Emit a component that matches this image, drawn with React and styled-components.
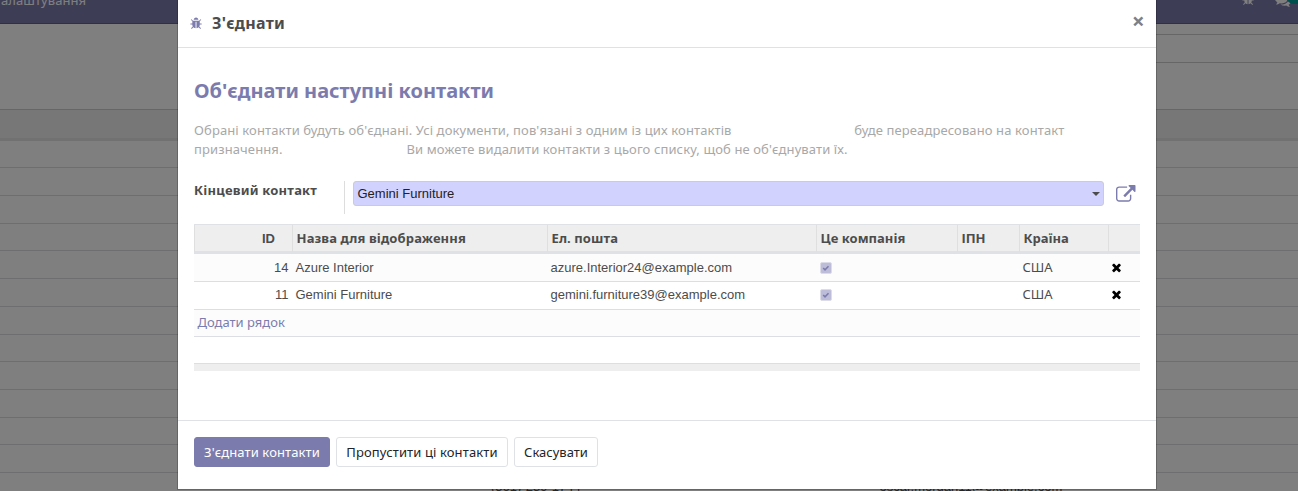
import React from "react";
import styled, { createGlobalStyle } from "styled-components";

const sans = `"Noto Sans", sans-serif`;
const arial = `"Liberation Sans", Arial, sans-serif`;

const Global = createGlobalStyle`
  * { box-sizing: border-box; }
  body { margin: 0; background: #fff; overflow: hidden; font: 13px/19.5px ${sans}; color: #4c4c4c; }
  button { font: inherit; cursor: pointer; }
`;

const Screen = styled.div`
  position: relative;
  height: 491px;
  overflow: hidden;
`;

/* Page behind the dialog */
const Navbar = styled.header`
  display: flex;
  align-items: flex-start;
  justify-content: space-between;
  height: 24px;
  background: #7c7bad;
  border-bottom: 1px solid #5f5e97;
  color: #fff;
`;
const NavItem = styled.span`
  margin: -9px 0 0 1px;
  letter-spacing: 0.07px;
`;
const NavIcons = styled.div`
  display: flex;
  align-items: flex-start;
  margin: -7px 0 0;
`;
const NavIcon = styled.svg`
  width: ${(p) => p.$size}px;
  height: ${(p) => p.$size}px;
  margin-top: ${(p) => p.$top || 0}px;
  margin-right: ${(p) => p.$gap || 0}px;
  fill: #fff;
`;
const Counter = styled.span`
  width: 20px;
  height: 16px;
  margin: -5px -8px 0 -5px;
  border-radius: 8px;
  background: #00a09d;
`;
const ControlPanel = styled.div`
  display: flex;
  justify-content: flex-end;
  height: 86px;
  padding-top: 10px;
  border-bottom: 1px solid #ccc;
`;
const SearchArea = styled.div`
  width: 649px;
  height: 29px;
  border: solid #ccc;
  border-width: 1px 0;
`;
const ListHead = styled.div`
  height: 31px;
  margin-bottom: -0.5px;
  background: #eee;
  border-bottom: 3px solid #e2e2e2;
`;
const ListRow = styled.div`
  display: flex;
  height: 27.72px;
  border-bottom: 1px solid #dcdce0;
  font: 13px/28px ${arial};
`;
const ListText = styled.span`
  width: ${(p) => p.$w}px;
  margin-left: ${(p) => p.$left}px;
  white-space: nowrap;
`;

/* Dialog */
const Backdrop = styled.div`
  position: absolute;
  inset: 0;
  background: rgba(0, 0, 0, 0.5);
  display: flex;
  justify-content: center;
  align-items: flex-start;
`;
const Dialog = styled.section`
  width: 980px;
  height: 490px;
  margin-left: 36px;
  border: 1px solid rgba(0, 0, 0, 0.2);
  border-top: 0;
  background: #fff;
  background-clip: padding-box;
  display: flex;
  flex-direction: column;
`;
const DialogHead = styled.div`
  display: flex;
  align-items: flex-start;
  height: 48px;
  padding: 0 12px;
  border-bottom: 1px solid #dee2e6;
`;
const Bug = styled.svg`
  width: 13px;
  height: 13px;
  margin-top: 17px;
  fill: #7c7bad;
`;
const DialogTitle = styled.h4`
  flex: 1;
  margin: 11px 0 0 9px;
  font-size: 16px;
  line-height: 24px;
  font-weight: 700;
  letter-spacing: 0.24px;
`;
const Close = styled.button`
  border: 0;
  padding: 0;
  margin: 10px -0.5px 0 0;
  background: none;
  color: #808080;
  font-size: 22px;
  line-height: 20px;
  height: 20px;
  font-weight: 700;
`;
const DialogBody = styled.div`
  height: 372px;
  padding: 30px 16px 0;
`;
const Heading = styled.h2`
  margin: 0 0 17px;
  font-size: 20px;
  line-height: 26px;
  color: #7c7bad;
`;
const Hint = styled.p`
  margin: 0;
  line-height: 19px;
  letter-spacing: 0.112px;
  color: #a8a8a8;
`;
const Blank = styled.span`
  display: inline-block;
  width: ${(p) => p.$w}px;
`;
const Field = styled.div`
  display: flex;
  height: 33px;
  margin: 22px 0 10px;
`;
const Label = styled.label`
  width: 151px;
  border-right: 1px solid #ddd;
  font-weight: 700;
  letter-spacing: 0.23px;
`;
const Select = styled.div`
  display: flex;
  align-items: center;
  justify-content: space-between;
  width: 751px;
  height: 25px;
  margin-left: 8px;
  padding: 0 3px 0 3.5px;
  border: 1px solid #ccc;
  border-radius: 3px;
  background: #d2d2ff;
  color: #222;
  font-family: ${arial};
`;
const Caret = styled.span`
  border: 4px solid transparent;
  border-top-color: #4c4c4c;
  border-bottom: 0;
`;
const External = styled.svg`
  width: 19.5px;
  height: 19.5px;
  margin: 3.5px 0 0 12px;
  fill: #7c7bad;
`;

const Table = styled.div`
  display: flex;
  flex-direction: column;
`;
const Row = styled.div`
  display: grid;
  grid-template-columns: 98px 255px 269px 141px 62px 89px 32px;
  height: ${(p) => p.$h}px;
  line-height: ${(p) => p.$line || 27}px;
  background: ${(p) => (p.$odd ? "#fcfcfc" : "#fff")};
  border-bottom: 1px solid #dddde6;
`;
const HeadRow = styled(Row)`
  background: #eee;
  border-top: 1px solid #dee2e6;
  border-bottom: 3px solid #dee2e6;
`;
const HeadCell = styled.div`
  border-left: 1px solid #dfdfdf;
  padding: ${(p) => (p.$right ? "0 17px 0 0" : "0 0 0 3.5px")};
  text-align: ${(p) => (p.$right ? "right" : "left")};
  font-family: ${(p) => (p.$right ? arial : sans)};
  font-weight: 700;
  letter-spacing: ${(p) => p.$track || 0}px;
`;
const Cell = styled.div`
  padding: ${(p) => (p.$right ? "0 3.5px 0 0" : "0 0 0 3.5px")};
  text-align: ${(p) => (p.$right ? "right" : "left")};
  font-family: ${(p) => (p.$noto ? sans : arial)};
`;
const IconCell = styled.div`
  display: flex;
  align-items: center;
  height: ${(p) => p.$h}px;
  padding-left: ${(p) => p.$pad}px;
`;
const CheckBox = styled.svg`
  width: 12px;
  height: 12px;
`;
const Remove = styled.svg`
  width: 13px;
  height: 13px;
  fill: #000;
`;
const AddLine = styled.a`
  grid-column: 1 / -1;
  padding-left: 3.5px;
  color: #7c7bad;
`;
const TableFoot = styled.div`
  height: 7px;
  background: #eee;
`;
const DialogFoot = styled.footer`
  display: flex;
  gap: 6px;
  height: 69px;
  padding: 16px;
  border-top: 1px solid #dee2e6;
`;
const Button = styled.button`
  width: ${(p) => p.$w}px;
  height: 30px;
  padding: 1px 0 0;
  border: 1px solid ${(p) => (p.$primary ? "#7c7bad" : "#dee2e6")};
  border-radius: 3px;
  background: ${(p) => (p.$primary ? "#7c7bad" : "#fff")};
  color: ${(p) => (p.$primary ? "#fff" : "#212529")};
  letter-spacing: ${(p) => p.$track || 0}px;
  white-space: nowrap;
`;

const BUG =
  "M1632 960q0 26-19 45t-45 19h-224q0 171-67 290l208 209q19 19 19 45t-19 45q-18 19-45 19t-45-19l-198-197q-5 5-15 13t-42 28.5-65 36.5-82 29-97 13v-896h-128v896q-51 0-101.5-13.5t-87-33-66-39-43.5-32.5l-15-14-183 207q-20 21-48 21-24 0-43-16-19-18-20.5-44.5t15.5-46.5l202-227q-58-114-58-274h-224q-26 0-45-19t-19-45 19-45 45-19h224v-294l-173-173q-19-19-19-45t19-45 45-19 45 19l173 173h844l173-173q19-19 45-19t45 19 19 45-19 45l-173 173v294h224q26 0 45 19t19 45zm-480-576h-640q0-133 93.5-226.5t226.5-93.5 226.5 93.5 93.5 226.5z";
const LINK =
  "M1408 928v320q0 119-84.5 203.5t-203.5 84.5h-832q-119 0-203.5-84.5t-84.5-203.5v-832q0-119 84.5-203.5t203.5-84.5h704q14 0 23 9t9 23v64q0 14-9 23t-23 9h-704q-66 0-113 47t-47 113v832q0 66 47 113t113 47h832q66 0 113-47t47-113v-320q0-14 9-23t23-9h64q14 0 23 9t9 23zm384-864v512q0 26-19 45t-45 19-45-19l-176-176-652 652q-10 10-23 10t-23-10l-114-114q-10-10-10-23t10-23l652-652-176-176q-19-19-19-45t19-45 45-19h512q26 0 45 19t19 45z";
const TIMES =
  "M1490 1322q0 40-28 68l-136 136q-28 28-68 28t-68-28l-294-294-294 294q-28 28-68 28t-68-28l-136-136q-28-28-28-68t28-68l294-294-294-294q-28-28-28-68t28-68l136-136q28-28 68-28t68 28l294 294 294-294q28-28 68-28t68 28l136 136q28 28 28 68t-28 68l-294 294 294 294q28 28 28 68z";
const COMMENTS =
  "M1408 768q0 139-94 257t-256.5 186.5-353.500 68.500q-86 0-176-16-124 88-278 128-36 9-86 16h-3q-11 0-20.500-8t-11.500-21q-1-3-1-6.500t.5-6.500 2-6l2.500-5 3.500-5.500 4-5 4.500-5 4-4.500q5-6 23-25t26-29.500 22.500-29 25-38.500 20.500-44q-124-72-195-177t-71-224q0-139 94-257t256.500-186.500 353.500-68.500 353.500 68.500 256.500 186.500 94 257zm384 256q0 120-71 224.500t-195 176.500q10 24 20.500 44t25 38.500 22.500 29 26 29.500 23 25q1 1 4 4.500t4.500 5 4 5 3.500 5.500l2.500 5 2 6 .5 6.500-1 6.500q-3 14-13 22t-22 7q-50-7-86-16-154-40-278-128-90 16-176 16-271 0-472-132 58 4 88 4 161 0 309-45t264-129q125-92 192-212t67-254q0-77-23-152 129 71 204 178t75 230z";

const people = [
  { id: 14, name: "Azure Interior", email: "azure.Interior24@example.com", line: 27 },
  { id: 11, name: "Gemini Furniture", email: "gemini.furniture39@example.com", line: 25 },
];
const headers = [
  { text: "Назва для відображення", track: 0.12 },
  { text: "Ел. пошта", track: 0.1 },
  { text: "Це компанія", track: 0.05 },
  { text: "ІПН" },
  { text: "Країна" },
  { text: "" },
];

export default function App() {
  return (
    <Screen>
      <Global />
      <Navbar>
        <NavItem>алаштування</NavItem>
        <NavIcons>
          <NavIcon $size={13} $gap={20} viewBox="0 0 1792 1792"><path d={BUG} /></NavIcon>
          <NavIcon $size={16} $top={-1} viewBox="0 0 1792 1792"><path d={COMMENTS} /></NavIcon>
          <Counter />
        </NavIcons>
      </Navbar>
      <ControlPanel><SearchArea /></ControlPanel>
      <ListHead />
      {Array.from({ length: 12 }, (_, i) => <ListRow key={i} />)}
      <ListRow>
        <ListText $left={491} $w={100}>(561)-239-1744</ListText>
        <ListText $left={288.5} $w={200}>oscar.morgan11@example.com</ListText>
      </ListRow>

      <Backdrop>
        <Dialog>
          <DialogHead>
            <Bug viewBox="0 0 1792 1792"><path d={BUG} /></Bug>
            <DialogTitle>З'єднати</DialogTitle>
            <Close>×</Close>
          </DialogHead>
          <DialogBody>
            <Heading>Об'єднати наступні контакти</Heading>
            <Hint>
              Обрані контакти будуть об'єднані. Усі документи, пов'язані з одним із цих контактів
              <Blank $w={122.6} />
              буде переадресовано на контакт
              <br />
              призначення.
              <Blank $w={124} />
              Ви можете видалити контакти з цього списку, щоб не об'єднувати їх.
            </Hint>
            <Field>
              <Label>Кінцевий контакт</Label>
              <Select>Gemini Furniture<Caret /></Select>
              <External viewBox="0 0 1792 1792"><path d={LINK} /></External>
            </Field>
            <Table>
              <HeadRow $h={30}>
                <HeadCell $right>ID</HeadCell>
                {headers.map((h, i) => <HeadCell key={i} $track={h.track}>{h.text}</HeadCell>)}
              </HeadRow>
              {people.map((p, i) => (
                <Row key={p.id} $h={28} $line={p.line} $odd={i % 2 === 0}>
                  <Cell $right>{p.id}</Cell>
                  <Cell>{p.name}</Cell>
                  <Cell>{p.email}</Cell>
                  <IconCell $pad={4} $h={p.line}>
                    <CheckBox viewBox="0 0 12 12">
                      <rect x="0.5" y="0.5" width="11" height="11" rx="1.5" fill="#bdbcd9" stroke="#dcdce8" />
                      <path d="M3.2 6l1.8 1.8L8.5 4.2" fill="none" stroke="#7c7bad" strokeWidth="1.6" />
                    </CheckBox>
                  </IconCell>
                  <Cell />
                  <Cell $noto>США</Cell>
                  <IconCell $pad={2} $h={p.line}>
                    <Remove viewBox="0 0 1792 1792"><path d={TIMES} /></Remove>
                  </IconCell>
                </Row>
              ))}
              <Row $h={27} $line={24.5} $odd><AddLine>Додати рядок</AddLine></Row>
              <Row $h={27} />
              <TableFoot />
            </Table>
          </DialogBody>
          <DialogFoot>
            <Button $w={136} $track={0.11} $primary>З'єднати контакти</Button>
            <Button $w={172} $track={0.12}>Пропустити ці контакти</Button>
            <Button $w={84}>Скасувати</Button>
          </DialogFoot>
        </Dialog>
      </Backdrop>
    </Screen>
  );
}
